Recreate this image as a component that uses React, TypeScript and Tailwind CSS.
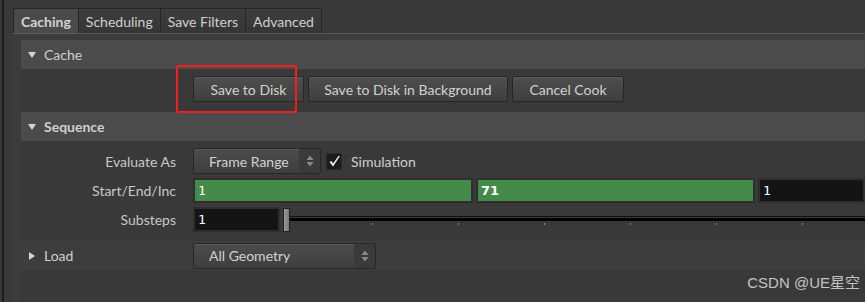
import { ReactNode } from "react";

const tabs = ["Caching", "Scheduling", "Save Filters", "Advanced"];
const ticks = [371, 457, 543, 629, 715, 801];

const Triangle = ({ open }: { open: boolean }) => (
  <svg width="10" height="10" viewBox="0 0 10 10" className="shrink-0">
    {open ? <path d="M1 2 L9 2 L5 8 Z" fill="#d4d4d4" /> : <path d="M2 1 L8 5 L2 9 Z" fill="#d4d4d4" />}
  </svg>
);

const SectionHeader = ({ title, open, bold, children }: { title: string; open: boolean; bold?: boolean; children?: ReactNode }) => (
  <div className="flex h-[29px] items-center bg-[#4b4b4b] pl-[6px]">
    <Triangle open={open} />
    <span className={`ml-[7px] text-[14px] text-[#cfcfcf] ${bold ? "font-bold" : ""}`}>{title}</span>
    {children}
  </div>
);

const Button = ({ label, w }: { label: string; w: string }) => (
  <div className={`flex h-[26px] ${w} items-center justify-center rounded-[2px] border border-[#262626] bg-gradient-to-b from-[#4e4e4e] to-[#3f3f3f] text-[14px] text-[#d2d2d2] shadow-[inset_0_1px_0_#5a5a5a]`}>
    {label}
  </div>
);

const Dropdown = ({ label, w }: { label: string; w: string }) => (
  <div className={`flex h-[26px] ${w} items-stretch rounded-[2px] border border-[#262626] bg-gradient-to-b from-[#4c4c4c] to-[#3e3e3e] shadow-[inset_0_1px_0_#585858]`}>
    <div className="flex flex-1 items-center pl-[15px] text-[14px] text-[#d2d2d2]">{label}</div>
    <div className="flex w-[21px] items-center justify-center bg-[#3a3a3a]">
      <svg width="8" height="12" viewBox="0 0 8 12">
        <path d="M4 0.5 L7.5 5 L0.5 5 Z" fill="#8a8a8a" />
        <path d="M0.5 7 L7.5 7 L4 11.5 Z" fill="#8a8a8a" />
      </svg>
    </div>
  </div>
);

const Label = ({ text }: { text: string }) => (
  <div className="w-[155px] shrink-0 text-right text-[14px] text-[#c8c8c8]">{text}</div>
);

const Field = ({ value, green, bold, w }: { value: string; green?: boolean; bold?: boolean; w: string }) => (
  <div className={`flex h-[25px] ${w} items-center border-2 border-[#2e2e2e] pl-[3px] text-[13px] text-white ${green ? "bg-[#448a48]" : "bg-[#141414]"} ${bold ? "font-bold" : ""}`} style={{ fontFamily: bold ? "'DejaVu Sans', sans-serif" : "'DejaVu Sans Mono', monospace" }}>
    {value}
  </div>
);

export default function App() {
  return (
    <div className="relative h-[302px] w-[865px] overflow-hidden bg-[#393939]" style={{ fontFamily: "Lato, 'Noto Sans', sans-serif" }}>
      <div className="flex h-full">
        <div className="w-[2px] shrink-0" />
        <div className="w-[2px] shrink-0 bg-[#1d1d1d]" />
        <div className="flex flex-1 flex-col pl-[9px] pt-[8px]">
          {/* tabs */}
          <div className="flex h-[25px] items-stretch">
            {tabs.map((t, i) => (
              <div
                key={t}
                className={`flex items-center border border-b-0 border-[#262626] px-[7px] pt-[1px] text-[14px] ${i === 0 ? "bg-[#4a4a4a] font-bold text-[#d4d4d4]" : "-ml-px bg-gradient-to-b from-[#3e3e3e] to-[#353535] text-[#cfcfcf]"}`}
              >
                {t}
              </div>
            ))}
          </div>
          <div className="h-px bg-[#5a5a5a]" />
          <div className="flex flex-1 flex-col bg-[#3c3c3c] pl-[8px] pt-[6px]">
            <SectionHeader title="Cache" open />
            <div className="flex h-[43px] items-start gap-[4px] bg-[#393939] pl-[172px] pt-[7px]">
              <Button label="Save to Disk" w="w-[111px]" />
              <Button label="Save to Disk in Background" w="w-[200px]" />
              <Button label="Cancel Cook" w="w-[112px]" />
            </div>
            <SectionHeader title="Sequence" open bold />
            <div className="flex flex-col bg-[#393939] pt-[7px] pb-[9px]">
              <div className="flex h-[26px] items-center gap-[17px]">
                <Label text="Evaluate As" />
                <div className="flex items-center">
                  <Dropdown label="Frame Range" w="w-[128px]" />
                  <div className="ml-[5px] flex h-[17px] w-[16px] items-center justify-center border border-[#2a2a2a] bg-[#1c1c1c]">
                    <svg width="13" height="13" viewBox="0 0 13 13">
                      <path d="M1.5 7 L5 11.5 L12 1 L10.5 1 L5 8.5 L3.5 6 Z" fill="#f0f0f0" />
                    </svg>
                  </div>
                  <span className="ml-[9px] text-[14px] text-[#cfcfcf]">Simulation</span>
                </div>
              </div>
              <div className="mt-[4px] flex h-[25px] items-center gap-[17px]">
                <Label text="Start/End/Inc" />
                <div className="flex flex-1 gap-[3px]">
                  <Field value="1" green w="w-[280px]" />
                  <Field value="71" green bold w="w-[279px]" />
                  <Field value="1" w="flex-1" />
                </div>
              </div>
              <div className="mt-[4px] flex h-[25px] items-center gap-[17px]">
                <Label text="Substeps" />
                <div className="flex flex-1 items-center">
                  <Field value="1" w="w-[87px]" />
                  <div className="ml-[3px] h-[24px] w-[7px] shrink-0 border border-[#222] bg-gradient-to-r from-[#9a9a9a] to-[#777]" />
                  <div className="relative h-[25px] flex-1">
                    <div className="absolute left-0 right-0 top-[9px] h-px bg-[#111]" />
                    <div className="absolute left-0 right-0 top-[11px] h-[3px] bg-black" />
                    {ticks.map((x) => (
                      <div key={x} className="absolute top-[16px] h-[2px] w-px bg-[#8a8a8a]" style={{ left: x - 289 }} />
                    ))}
                  </div>
                </div>
              </div>
            </div>
            <div className="flex h-[29px] items-center bg-[#3d3d3d] pl-[6px]">
              <Triangle open={false} />
              <span className="ml-[7px] w-[149px] text-[14px] text-[#cfcfcf]">Load</span>
              <Dropdown label="All Geometry" w="w-[183px]" />
            </div>
            <div className="flex-1 bg-[#393939]" />
          </div>
        </div>
      </div>
      {/* annotation */}
      <div className="absolute left-[176px] top-[65px] h-[48px] w-[121px] rounded-[3px] border-2 border-[#f02020]" />
      <div className="absolute bottom-[8px] right-[5px] text-[15px] text-[#c4c4c4]" style={{ fontFamily: "'Liberation Sans', 'Noto Sans CJK SC', sans-serif" }}>
        CSDN @UE星空
      </div>
    </div>
  );
}
